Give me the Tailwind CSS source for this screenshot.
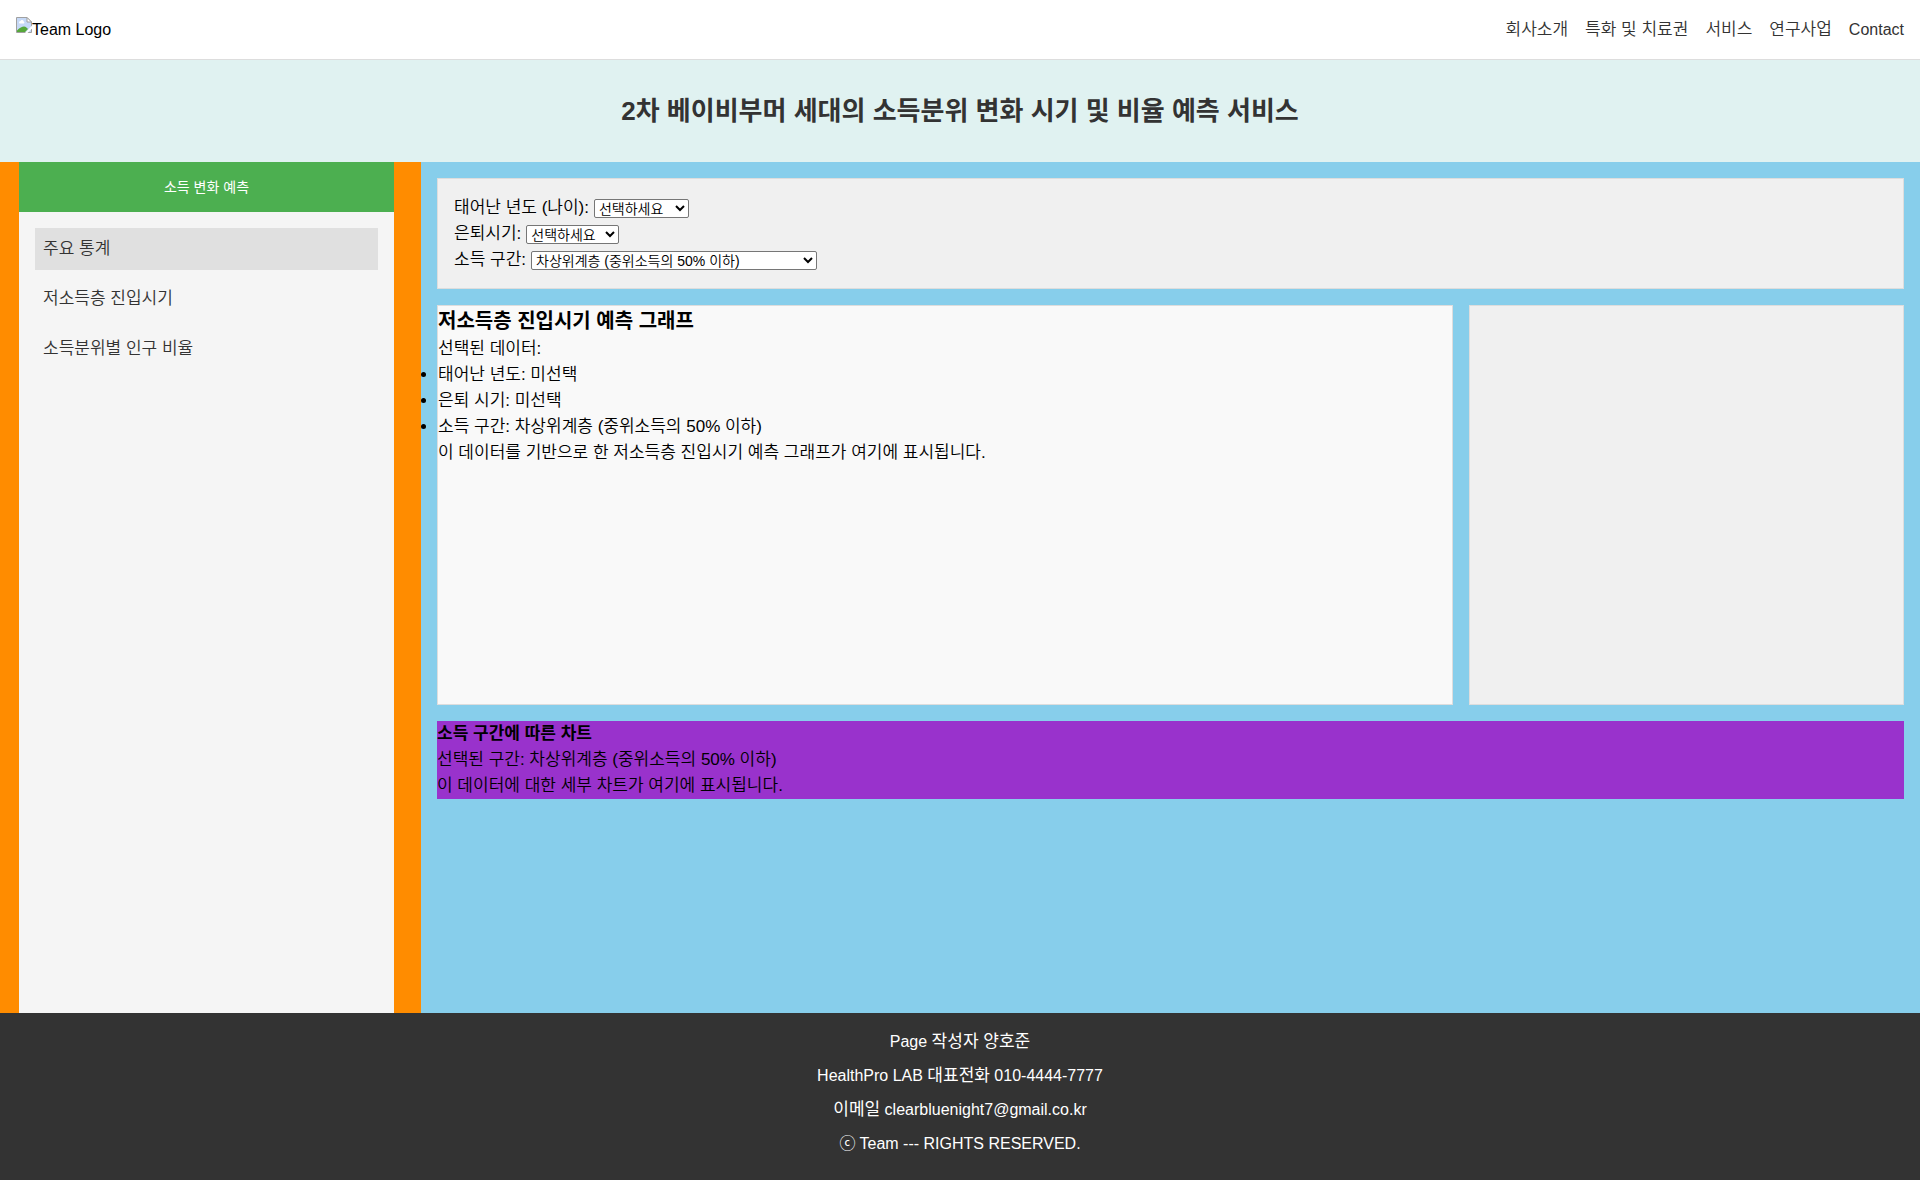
<!DOCTYPE html>
<html lang="ko">
<head>
<meta charset="utf-8">
<meta name="viewport" content="width=device-width, initial-scale=1">
<title>소득분위 변화 예측 서비스</title>
<script src="https://cdn.jsdelivr.net/npm/@tailwindcss/browser@4"></script>
</head>
<body class="flex min-h-screen flex-col bg-white font-['Liberation_Sans','Noto_Sans_CJK_KR',sans-serif] text-[17px] leading-[26px] font-[350] text-black">
  <header class="flex h-[60px] items-center justify-between border-b border-[#ddd] px-4">
    <a href="#" class="flex text-base" aria-label="Team Logo">
      <svg class="-mt-px h-4 w-4" viewBox="0 0 16 16" aria-hidden="true">
        <path d="M0.5 0.5H11L15.500 5V15.500H0.500Z" fill="#c6d9f7" stroke="#a0a0a0"/>
        <path d="M3 5.500a1.500 1.500 0 0 1 1.500-1.500 1.700 1.700 0 0 1 3.200.6 1.200 1.200 0 0 1 .3 1.900H3.500Z" fill="#fff"/>
        <path d="M1 15V13.500C4 10.500 6 9.500 8 9.500S11 11 12 12L9 15Z" fill="#56a83a"/>
        <path d="M16 8.500 9 16h2.500L16 11.500Z" fill="#fff"/>
        <path d="M11 0.500V5H15.500Z" fill="#fff" stroke="#a0a0a0"/>
      </svg>
      <span class="leading-6">Team Logo</span>
    </a>
    <nav class="flex gap-[17px] text-[#333]">
      <a href="#">회사소개</a>
      <a href="#">특화 및 치료권</a>
      <a href="#">서비스</a>
      <a href="#">연구사업</a>
      <a href="#" class="text-base leading-[26px]">Contact</a>
    </nav>
  </header>

  <div class="bg-[#e0f2f1] px-4 py-8 text-center text-[#333]">
    <h1 class="text-[26px] leading-[38px] font-bold">2차 베이비부머 세대의 소득분위 변화 시기 및 비율 예측 서비스</h1>
  </div>

  <div class="flex grow">
    <aside class="flex w-[421px] shrink-0 bg-[#ff8c00] pr-[27px] pl-[19px]">
      <div class="grow bg-[#f5f5f5]">
        <button type="button" class="h-[50px] w-full bg-[#4caf50] text-sm font-normal text-white">소득 변화 예측</button>
        <ul class="flex flex-col gap-2 p-4 text-[#333]">
          <li><a href="#" class="block bg-[#e0e0e0] p-2">주요 통계</a></li>
          <li><a href="#" class="block p-2">저소득층 진입시기</a></li>
          <li><a href="#" class="block p-2">소득분위별 인구 비율</a></li>
        </ul>
      </div>
    </aside>

    <main class="flex min-w-0 grow flex-col gap-4 bg-[#87ceeb] p-4">
      <form class="border border-[#ddd] bg-[#f0f0f0] px-4 pt-4 pb-[15px]">
        <div class="flex items-center gap-[5px]">
          <label for="birth">태어난 년도 (나이):</label>
          <select id="birth" class="h-[19px] w-[95px] rounded-[2px] border border-[#767676] bg-white text-sm leading-4"><option>선택하세요</option></select>
        </div>
        <div class="flex items-center gap-[5px]">
          <label for="retire">은퇴시기:</label>
          <select id="retire" class="h-[19px] w-[93px] rounded-[2px] border border-[#767676] bg-white text-sm leading-4"><option>선택하세요</option></select>
        </div>
        <div class="flex items-center gap-[5px]">
          <label for="income">소득 구간:</label>
          <select id="income" class="h-[19px] w-[286px] rounded-[2px] border border-[#767676] bg-white text-sm leading-4"><option>차상위계층 (중위소득의 50% 이하)</option></select>
        </div>
      </form>

      <div class="grid min-h-[400px] grid-cols-[7fr_3fr] gap-4">
        <section class="border border-[#ddd] bg-[#f9f9f9]">
          <h2 class="text-xl leading-[30px] font-bold">저소득층 진입시기 예측 그래프</h2>
          <p>선택된 데이터:</p>
          <ul class="list-disc">
            <li>태어난 년도: 미선택</li>
            <li>은퇴 시기: 미선택</li>
            <li>소득 구간: 차상위계층 (중위소득의 50% 이하)</li>
          </ul>
          <p>이 데이터를 기반으로 한 저소득층 진입시기 예측 그래프가 여기에 표시됩니다.</p>
        </section>
        <section class="border border-[#ddd] bg-[#f0f0f0]"></section>
      </div>

      <section class="bg-[#9932cc]">
        <h3 class="font-bold">소득 구간에 따른 차트</h3>
        <p>선택된 구간: 차상위계층 (중위소득의 50% 이하)</p>
        <p>이 데이터에 대한 세부 차트가 여기에 표시됩니다.</p>
      </section>
    </main>
  </div>

  <footer class="flex flex-col gap-2 bg-[#333] px-4 pt-4 pb-[23px] text-center text-base leading-[26px] font-normal text-white">
    <p>Page <span class="text-[17px] leading-none">작성자 양호준</span></p>
    <p>HealthPro LAB <span class="text-[17px] leading-none">대표전화</span> 010-4444-7777</p>
    <p><span class="text-[17px] leading-none">이메일</span> clearbluenight7@gmail.co.kr</p>
    <p>ⓒ Team --- RIGHTS RESERVED.</p>
  </footer>
</body>
</html>
